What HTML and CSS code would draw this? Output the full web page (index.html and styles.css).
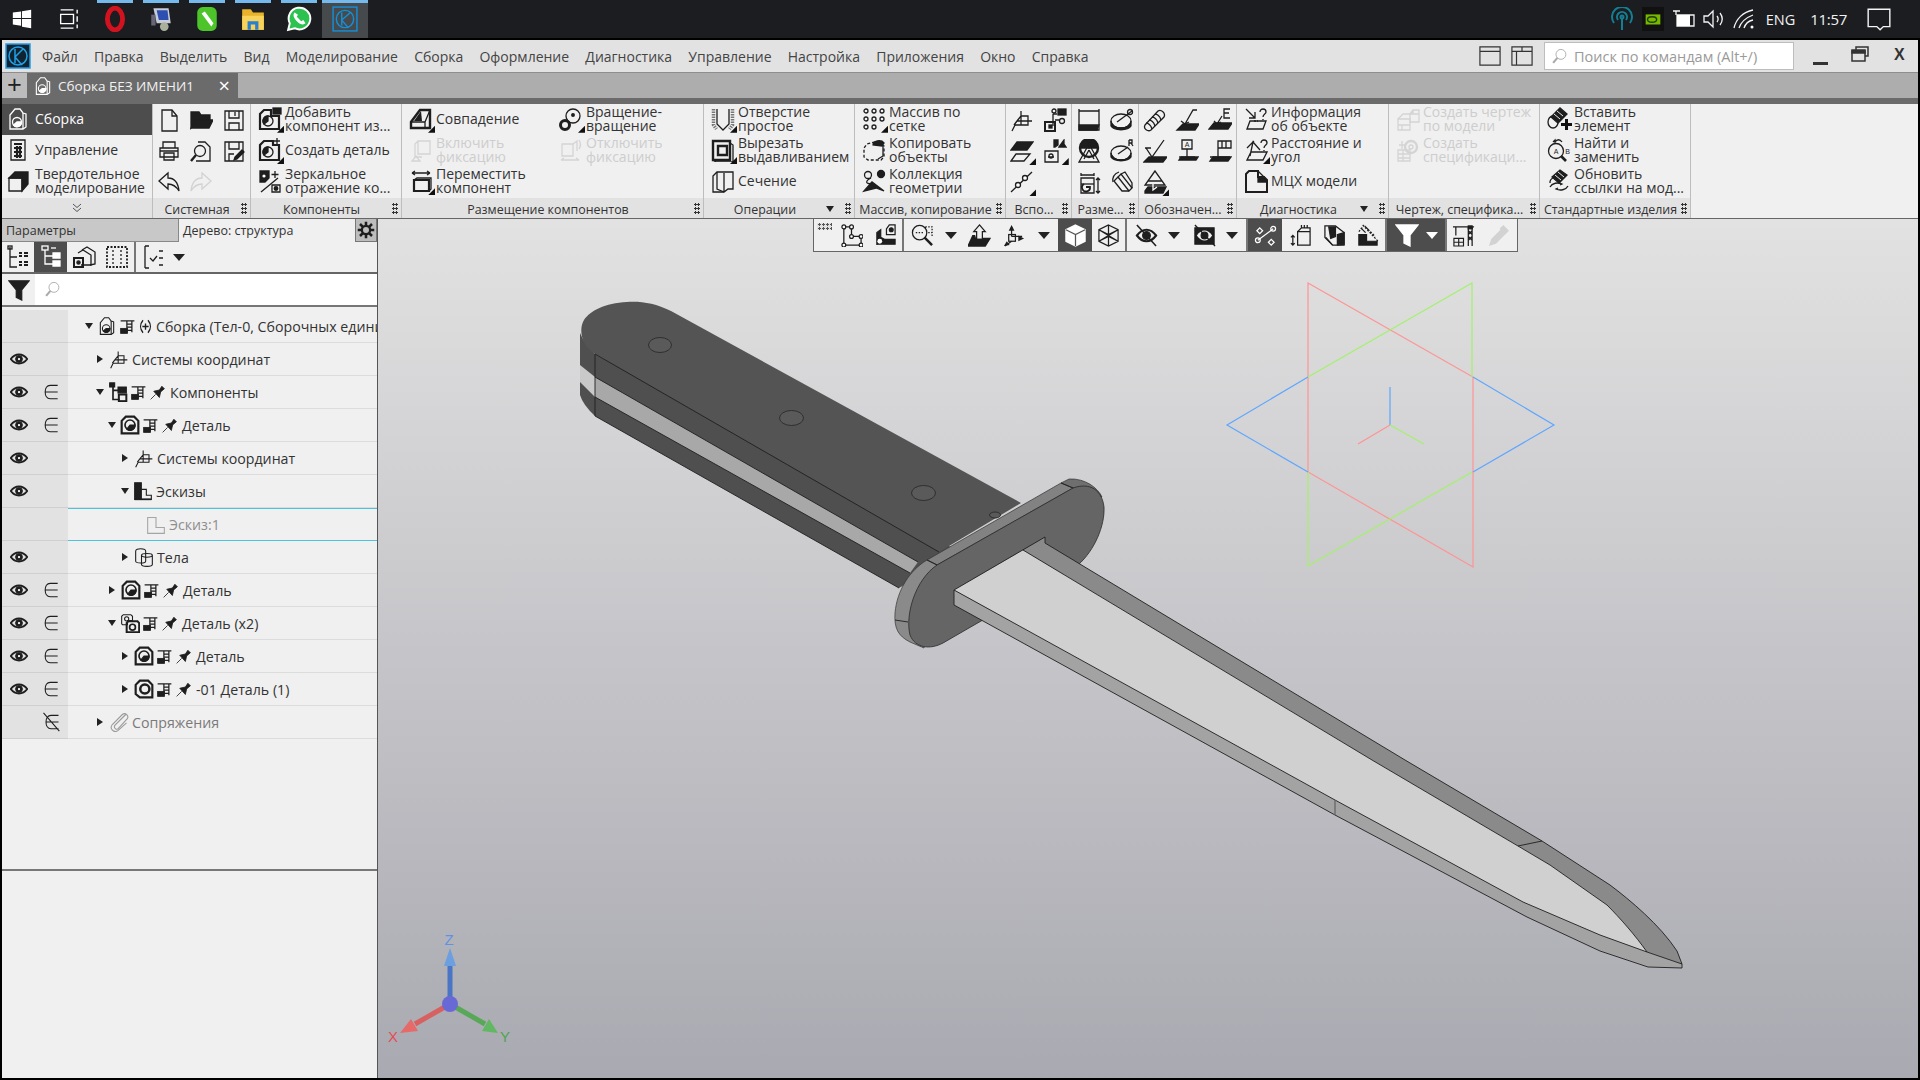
FILE: index.html
```html
<!DOCTYPE html>
<html lang="ru">
<head>
<meta charset="utf-8">
<title>КОМПАС-3D</title>
<link rel="stylesheet" href="styles.css">
</head>
<body>
<svg class="defs" aria-hidden="true">
<symbol id="asm" viewBox="0 0 24 24"><path d="M4 22V8l5-6h5l3 4 3 1v13l-3 2z"/><path d="M17 6v16"/><circle cx="11" cy="15" r="4.500"/><path d="M11 15h4.500a4.500 4.500 0 0 1-8 3z" fill="currentColor"/></symbol>
<symbol id="mgr" viewBox="0 0 24 24"><path d="M5 2h14v20H5z"/><path d="M8 6h8M8 10h8M8 14h8M8 18h8M11 8v12M14 8v12" stroke-width="2.200"/></symbol>
<symbol id="solid" viewBox="0 0 24 24"><path d="M3 22V9h13v13z"/><path d="M3 9l6-6h13v12l-6 7V9z" fill="currentColor"/></symbol>
<symbol id="doc" viewBox="0 0 24 24"><path d="M5 2h10l5 6v15H5z"/><path d="M15 2v6h5"/></symbol>
<symbol id="open" viewBox="0 0 24 24"><path d="M2 7V4h8l2 3h9v5H8l-6 8z" fill="currentColor"/><path d="M2 20l5-8h17l-4 8z" fill="currentColor"/></symbol>
<symbol id="save" viewBox="0 0 24 24"><path d="M3 3h18v19H3z"/><path d="M7 3v7h10V3M7 22v-7h10v7M13 4v4"/></symbol>
<symbol id="print" viewBox="0 0 24 24"><path d="M6 9V3h12v6M3 9h18v9H3zM7 14h10v7H7zM3 12h18"/></symbol>
<symbol id="prev" viewBox="0 0 24 24"><path d="M9 3h7l5 5v14H7"/><circle cx="11" cy="12" r="5.500"/><path d="M7 16l-5 6" stroke-width="2.400"/></symbol>
<symbol id="saveas" viewBox="0 0 24 24"><path d="M3 3h18v19H3zM7 3v7h10V3M7 22v-7h5"/><path d="M12 21l3-1 7-7-2-2-7 7z" fill="currentColor"/></symbol>
<symbol id="undo" viewBox="0 0 24 24"><path d="M2 11l9-8v5c6 0 10 4 11 13-3-5-6-7-11-7v5z"/></symbol>
<symbol id="redo" viewBox="0 0 24 24"><path d="M22 11l-9-8v5c-6 0-10 4-11 13 3-5 6-7 11-7v5z"/></symbol>
<symbol id="addc" viewBox="0 0 24 24"><path d="M2 22V7l4-4h7v6h8v13z" stroke-width="2.200"/><rect x="15" y="1" width="8" height="6" fill="currentColor"/><circle cx="10" cy="14" r="5"/><path d="M10 14V9a5 5 0 0 0-4 8z" fill="currentColor"/></symbol>
<symbol id="newc" viewBox="0 0 24 24"><path d="M2 22V7l4-4h9v4h6v15z" stroke-width="2.200"/><circle cx="10" cy="14" r="5"/><path d="M10 14V9a5 5 0 0 0-4 8z" fill="currentColor"/><path d="M19 0v6M16 3h6"/></symbol>
<symbol id="mirror" viewBox="0 0 24 24"><path d="M2 2h9v7l-4 4H2z" fill="currentColor"/><circle cx="6" cy="7" r="1.600" fill="#fff" stroke="none"/><path d="M17 2v7M13.500 5.500h7M3 23L20 9"/><path d="M14 16h8v7h-8z"/><circle cx="18" cy="19.500" r="1.800" fill="currentColor"/></symbol>
<symbol id="coin" viewBox="0 0 24 24"><path d="M2 21v-6l9-12h10v18z" stroke-width="2.400"/><path d="M2 15h14v6M16 15l5-12"/><path d="M12 4l-7 10h8z" fill="currentColor" stroke="none"/></symbol>
<symbol id="rot" viewBox="0 0 24 24"><circle cx="14" cy="9" r="7"/><circle cx="14" cy="8" r="1.300" fill="currentColor"/><circle cx="6" cy="18" r="4.500" stroke-width="3"/></symbol>
<symbol id="fix" viewBox="0 0 24 24"><path d="M9 3h12v13H9zM9 3l-3 3v13M13 19h-7"/><path d="M3 23h8l-4-5z"/></symbol>
<symbol id="unfix" viewBox="0 0 24 24"><path d="M3 6h11v12H3zM14 6l4-3v10"/><path d="M2 22h18M2 22l3-2M20 22l-3-2M20 2c2 3 2 6 0 9"/></symbol>
<symbol id="move" viewBox="0 0 24 24"><path d="M3 4h18M3 4l3-2M3 4l3 2M21 4l-3-2M21 4l-3 2"/><path d="M5 11h15v11H5z" stroke-width="2.200"/><path d="M5 11l3-2h14v11l-2 2"/></symbol>
<symbol id="hole" viewBox="0 0 24 24"><path d="M2.500 2v16l3 4M21.500 2v16l-3 4" stroke-dasharray="1.500 1" stroke-width="3.500" stroke="#777"/><path d="M6 2v15l6 6 6-6V2"/></symbol>
<symbol id="cut" viewBox="0 0 24 24"><path d="M2 3h17v19H2z" stroke-width="2.400"/><path d="M19 5l3 2v17H5l-3-2"/><path d="M7 8h9v9H7z" stroke-width="2.400"/></symbol>
<symbol id="sect" viewBox="0 0 24 24"><path d="M2 7l4-4h16v17h-5l-4 3H2zM13 4v19"/><path d="M6 3v17l7 3"/></symbol>
<symbol id="grid" viewBox="0 0 24 24"><g stroke-width="1.300"><circle cx="4" cy="4" r="2"/><circle cx="12" cy="4" r="2"/><circle cx="20" cy="4" r="2"/><circle cx="4" cy="12" r="2"/><circle cx="12" cy="12" r="2"/><circle cx="20" cy="12" r="2"/><circle cx="4" cy="20" r="2"/><circle cx="12" cy="20" r="2"/></g></symbol>
<symbol id="copy" viewBox="0 0 24 24"><path d="M13 4l-8 2-3 4v9l4 3h13l3-3V8z" stroke-dasharray="3 2"/><path d="M11 7c0-4 8-6 11-2l-2 3z" fill="currentColor"/><path d="M21 8v10l-5 3"/></symbol>
<symbol id="coll" viewBox="0 0 24 24"><circle cx="19" cy="5" r="3.500" fill="currentColor"/><circle cx="6" cy="6" r="3.500"/><path d="M9 9c-6 3-6 7 2 5"/><path d="M2 22l8-9 12 9-8-3z" fill="currentColor"/></symbol>
<symbol id="cs" viewBox="0 0 24 24"><path d="M7 13h15M11 3v14M7 13l4-5h7v9H5M5 17l-3 6M7 13l-3 4"/></symbol>
<symbol id="tree2" viewBox="0 0 24 24"><path d="M10 6v12M14 6h-4M12 12h4"/><circle cx="11" cy="3" r="2"/><rect x="15" y="1" width="8" height="6" fill="currentColor"/><circle cx="19" cy="13" r="2.500"/><rect x="2" y="14" width="10" height="9" stroke-width="2"/><rect x="6" y="17" width="3" height="3" fill="currentColor"/></symbol>
<symbol id="plane" viewBox="0 0 24 24"><path d="M7 3h16l-6 8H1z" fill="currentColor"/><path d="M6 15h14l-6 7H1z"/></symbol>
<symbol id="cs2" viewBox="0 0 24 24"><path d="M2 12h13v11H2zM5 18h6"/><circle cx="8" cy="17" r="2"/><path d="M11 1h4v5l-3 2h-1zM16 8l5-7v4l2 3z" fill="currentColor"/></symbol>
<symbol id="line" viewBox="0 0 24 24"><path d="M1 22L22 2"/><circle cx="8" cy="15" r="2.500" fill="#fff"/><circle cx="15" cy="8" r="2.500" fill="#fff"/></symbol>
<symbol id="dim" viewBox="0 0 24 24"><path d="M2 1v5M22 1v5M2 3h20M2 5v17h20V5"/><path d="M2 17h20l-2 5H2z" fill="currentColor"/></symbol>
<symbol id="diam" viewBox="0 0 24 24"><ellipse cx="11" cy="13" rx="10" ry="7"/><path d="M1 13v5c3 5 17 5 20 0v-5a10 7 0 0 1-20 0z" fill="currentColor"/><path d="M7 14L22 3"/><circle cx="20" cy="4" r="2.500"/></symbol>
<symbol id="auto" viewBox="0 0 24 24"><circle cx="12" cy="9" r="9" stroke-width="2.400"/><path d="M3 9a9 9 0 0 1 9-9v9z" fill="currentColor"/><path d="M21 9a9 9 0 0 0-9-9v9z" fill="currentColor"/><path d="M12 5L2 23h20z"/><path d="M12 11l-5 9M12 11l5 9"/></symbol>
<symbol id="rad" viewBox="0 0 24 24"><ellipse cx="11" cy="14" rx="10" ry="7"/><path d="M1 14v4c3 5 17 5 20 0v-4a10 7 0 0 1-20 0z" fill="currentColor"/><path d="M8 15l10-7"/><path d="M19 1v6M19 1h3v3h-3M21 4l2 3"/></symbol>
<symbol id="cham" viewBox="0 0 24 24"><path d="M4 8h13v15H4zM4 3v3M17 3v3M4 5h13M21 8v15M19 10l2-2 2 2M19 21l2 2 2-2"/><path d="M7 14a4 4 0 1 0 6 3h-4" stroke-width="1.800"/><path d="M4 14h13"/></symbol>
<symbol id="ang" viewBox="0 0 24 24"><path d="M8 7l11 14 3-3L11 4z"/><path d="M11 4l4-2 7 11v5M8 7l-4 4 8 10h7"/><path d="M3 12c-1-5 1-8 6-10"/></symbol>
<symbol id="thread" viewBox="0 0 24 24"><path d="M2 17L15 3c3-2 8 2 6 6L8 22c-3 2-8-1-6-5z"/><path d="M12 6c2 0 5 2 6 6M9 9c2 0 5 2 6 6M6 12c2 0 5 2 6 6M3 15c2 0 5 2 6 6"/></symbol>
<symbol id="lead" viewBox="0 0 24 24"><path d="M22 2h-4L10 16M10 16l-4-3M10 16l4-2"/><path d="M8 16h16l-4 6H2z" fill="currentColor"/></symbol>
<symbol id="leadE" viewBox="0 0 24 24"><path d="M14 8L9 16M9 16l-3-3M9 16l4-2M22 1h-6v9h6M16 5h5"/><path d="M6 15h18l-4 6H1z" fill="currentColor"/></symbol>
<symbol id="rough" viewBox="0 0 24 24"><path d="M3 9l6 9L21 1M2 9h6"/><path d="M6 18h18l-4 5H1z" fill="currentColor"/></symbol>
<symbol id="tol" viewBox="0 0 24 24"><path d="M10 2h13v7H10zM14 2v7M18 2v7M10 2v16M2 18h20"/><path d="M2 22h18l3-4H5z" fill="currentColor"/></symbol>
<symbol id="note" viewBox="0 0 24 24"><path d="M12 1L2 15h20zM5 11h14"/><path d="M2 21l3-4h18l-3 6H2z" fill="currentColor"/><path d="M10 14v6l4-3" stroke="#fff"/></symbol>
<symbol id="info" viewBox="0 0 24 24"><path d="M2 2l9 9M11 5v6H5M3 22l3-8h16l-3 8z"/><path d="M16 5c0-4 6-4 6 0 0 2-3 2-3 5M19 12v1"/><path d="M10 14h4" stroke-dasharray="2 1"/></symbol>
<symbol id="dist" viewBox="0 0 24 24"><path d="M3 22l4-8h16l-4 8zM3 10l7-7M6 18L9 4l7 8"/><path d="M17 5c0-4 6-4 6 0 0 2-3 2-3 5M20 12v1"/></symbol>
<symbol id="mass" viewBox="0 0 24 24"><path d="M2 5l3-3h9v6h6l3 3v12H2z" stroke-width="2"/><path d="M14 2v11h9l-3-5h-6z" fill="currentColor"/><path d="M14 2l6 6"/></symbol>
<symbol id="draw" viewBox="0 0 24 24"><path d="M14 7l3-4h6v12h-9zM14 7h9M17 3v4"/><path d="M2 12h12v11H2zM2 18h12M6 18v5"/><path d="M2 12l5-5h7"/></symbol>
<symbol id="spec" viewBox="0 0 24 24"><path d="M2 12h12v11H2zM2 16h12M2 20h12M7 12v11"/><circle cx="15" cy="9" r="6" stroke-width="2.400"/><circle cx="15" cy="9" r="2"/><path d="M6 3v8M3 7h7"/></symbol>
<symbol id="bolt" viewBox="0 0 24 24"><ellipse cx="6" cy="15" rx="5" ry="6"/><path d="M4 10l9-9 7 6-9 9z" fill="currentColor"/><path d="M7 7l6 5M10 4l6 5" stroke="#fff" stroke-width=".9"/></symbol>
<symbol id="bolt2" viewBox="0 0 24 24"><path d="M3 14a5 5 0 0 1 3-5"/><path d="M5 8l8-7 7 5-8 8z" fill="currentColor"/><path d="M8 6l6 5M11 3l6 5" stroke="#fff" stroke-width=".9"/><path d="M3 18c2-4 8-5 12-3l-2 1M21 17c-2 4-8 5-12 3l2-1"/></symbol>
<symbol id="panel1" viewBox="0 0 24 24"><path d="M1 2h22v20H1zM1 7h22"/></symbol>
<symbol id="panel2" viewBox="0 0 24 24"><path d="M1 2h22v20H1zM1 7h22M6 7v15M12 2v5"/></symbol>
<symbol id="mag" viewBox="0 0 24 24"><circle cx="14" cy="9" r="7"/><path d="M9 14l-6 7" stroke-width="3"/></symbol>
<symbol id="tbsk" viewBox="0 0 24 24"><path d="M4 3v19h18v-9H12V3z"/><g fill="#fff"><circle cx="4" cy="3" r="2"/><circle cx="12" cy="3" r="2"/><circle cx="12" cy="13" r="2"/><circle cx="22" cy="13" r="2"/><circle cx="22" cy="22" r="2"/><circle cx="4" cy="22" r="2"/></g></symbol>
<symbol id="tbpart" viewBox="0 0 24 24"><path d="M3 22V9l4-3v8l4 2h11v5H3z" fill="currentColor"/><path d="M13 5l3-4h6v10h-9z"/><circle cx="18" cy="6" r="2" fill="currentColor"/><circle cx="6" cy="18" r="2.500" fill="#fff" stroke="none"/></symbol>
<symbol id="zoom" viewBox="0 0 24 24"><circle cx="9" cy="9" r="7.500"/><path d="M14 14l8 8" stroke-width="2.600"/><path d="M5 9h8M15 3h7v11M15 3v2M18 9h4" stroke-dasharray="1.500 1.500"/></symbol>
<symbol id="up" viewBox="0 0 24 24"><path d="M12 1l6 7h-3v8H9V8H6z"/><path d="M7 12H5l-5 11h18l5-8h-7v1H8z" fill="currentColor"/></symbol>
<symbol id="axes" viewBox="0 0 24 24"><path d="M10 13V3M10 13h11M10 18l-7 5"/><path d="M10 1l-3 6h6zM23 15l-6-3v6zM2 23l6-1-3-4z" fill="currentColor" stroke="none"/><rect x="7" y="11" width="7" height="7"/></symbol>
<symbol id="shade" viewBox="0 0 24 24"><path d="M12 1l10 5v12l-10 5-10-5V6z" fill="#fff"/><path d="M2 6l10 5 10-5M12 11v12" stroke="#555"/></symbol>
<symbol id="wire" viewBox="0 0 24 24"><path d="M12 1l10 5v12l-10 5-10-5V6zM2 6l10 5 10-5M12 11v12M2 18l10-5 10 5M12 1v12M2 6l20 12M22 6L2 18"/></symbol>
<symbol id="eye" viewBox="0 0 24 24"><path d="M1 12c6-8 16-8 22 0-6 8-16 8-22 0z" stroke-width="2.600"/><circle cx="12" cy="12" r="4.500" fill="currentColor"/><circle cx="12" cy="12" r="1.500" fill="#fff" stroke="none"/></symbol>
<symbol id="hide" viewBox="0 0 24 24"><path d="M2 12c6-8 14-8 20 0-6 8-14 8-20 0z" stroke-width="2.200"/><circle cx="12" cy="12" r="4" fill="currentColor"/><path d="M2 1l20 22" stroke-width="1.600"/></symbol>
<symbol id="hide2" viewBox="0 0 24 24"><path d="M2 4h20v17H2z" fill="currentColor"/><path d="M4 12c5-7 11-7 16 0-5 7-11 7-16 0z" fill="#f0f0f0" stroke="none"/><circle cx="12" cy="12" r="3.500" fill="currentColor"/><path d="M2 1l21 22" stroke-width="1.400"/></symbol>
<symbol id="snap" viewBox="0 0 24 24"><path d="M4 17L20 5"/><circle cx="20" cy="5" r="2.500"/><path d="M6 4l3 3-3 3-3-3zM18 16l3 3-3 3-3-3z"/><circle cx="4" cy="17" r="2.500"/></symbol>
<symbol id="fnode" viewBox="0 0 24 24"><path d="M9 8h13v14H9zM9 8l4-4h9v4M13 1v3M16 1v3M19 1v3M4 12v10M2 14l2-2 2 2M2 20l2 2 2-2"/></symbol>
<symbol id="fsolid" viewBox="0 0 24 24"><path d="M2 2h11l9 7v13H10L2 14z"/><path d="M6 3h7v10l-5 2zM15 11l7-2v12l-7 1z" fill="currentColor"/><path d="M3 14l7 8"/></symbol>
<symbol id="fsk" viewBox="0 0 24 24"><path d="M3 22V11h8v7h11v4z" fill="currentColor"/><path d="M7 1l16 17M3 8l5-6M15 8l5 5" stroke-dasharray="2 1.500"/><path d="M5 4l5 5M9 2l5 5"/></symbol>
<symbol id="filter" viewBox="0 0 24 24"><path d="M1 2h22l-8 10v11l-6-3v-8z" fill="currentColor"/></symbol>
<symbol id="crane" viewBox="0 0 24 24"><path d="M1 3h22M17 3v20M21 3v20M17 7l4 4M21 7l-4 4M17 13l4 4M21 13l-4 4M4 3v9"/><path d="M2 15h10v8H2zM2 19h10M7 15v8" stroke-width="1.200"/><rect x="17" y="2" width="4" height="3" fill="currentColor"/></symbol>
<symbol id="drop" viewBox="0 0 24 24"><path d="M3 22l2-6L15 6l4 4L9 20z" fill="currentColor"/><path d="M14 5l3-3 5 5-3 3z" fill="currentColor"/></symbol>
<symbol id="gear" viewBox="0 0 24 24"><circle cx="12" cy="12" r="5.500" stroke-width="3"/><path d="M12 1v5M12 18v5M1 12h5M18 12h5M4 4l4 4M16 16l4 4M20 4l-4 4M8 16l-4 4" stroke-width="3.400"/></symbol>
<symbol id="numtree" viewBox="0 0 24 24"><path d="M4 2v20h7M4 12h7"/><rect x="2" y="1" width="4" height="3"/><path d="M13 8h3M18 8h4M13 11h3M18 11h4M13 17h3M18 17h4M13 20h3M18 20h4" stroke-width="2"/></symbol>
<symbol id="strtree" viewBox="0 0 24 24"><path d="M6 5v14h8M6 11h8"/><rect x="3" y="1" width="6" height="4"/><path d="M14 8h7v5h-7zM14 16h7v5h-7z" fill="currentColor"/><path d="M12 3h5"/></symbol>
<symbol id="parts" viewBox="0 0 24 24"><path d="M10 5l5-3 8 5v12l-5 1"/><path d="M6 8l5-3 8 5v10H9"/><rect x="2" y="13" width="9" height="9" stroke-width="2"/><circle cx="6.500" cy="17.500" r="1.600" fill="currentColor"/></symbol>
<symbol id="dashes" viewBox="0 0 24 24"><path d="M2 2h20v20H2z" stroke-dasharray="2 1.500" stroke-width="1.800"/><path d="M8 5v14M16 5v14" stroke-dasharray="2 2"/></symbol>
<symbol id="checks" viewBox="0 0 24 24"><path d="M4 1v22M4 1h4M4 23h4M9 13l3 3 4-5M18 6h4M18 13h4M18 20h4"/></symbol>
<symbol id="model" viewBox="0 0 24 24"><path d="M1 3h22M11 3v18M19 3v18M11 8h8M11 13h8M11 18h8" stroke-width="2"/><rect x="1" y="15" width="11" height="8" fill="currentColor"/></symbol>
<symbol id="pin" viewBox="0 0 24 24"><path d="M1 23l8-8"/><path d="M6 10l9-2 4-6 4 4-6 5-2 9z" fill="currentColor"/></symbol>
<symbol id="plus" viewBox="0 0 24 24"><path d="M8 2C3 8 3 16 8 22M16 2c5 6 5 14 0 20M7 12h10M12 7v10" stroke-width="2.200"/></symbol>
<symbol id="compo" viewBox="0 0 24 24"><path d="M6 3v18h8M6 10h8M2 3h6" stroke-width="2"/><rect x="2" y="1" width="6" height="5" fill="currentColor"/><path d="M12 6h10v7H12z" fill="currentColor"/><rect x="13" y="15" width="9" height="8" stroke-width="2.400"/></symbol>
<symbol id="part" viewBox="0 0 24 24"><path d="M2 22V7l5-5h10l5 5v15z" stroke-width="2.600"/><circle cx="12" cy="12" r="6" stroke-width="2"/><path d="M12 12h6a6 6 0 0 1-10 5z" fill="currentColor"/></symbol>
<symbol id="part2" viewBox="0 0 24 24"><path d="M2 18V7l5-5h10l5 5v15H7z" stroke-width="2.600"/><circle cx="13" cy="12" r="5.500" stroke-width="3"/></symbol>
<symbol id="parts2" viewBox="0 0 24 24"><path d="M2 13V4l2-2h9l2 2v5H9v5H3z"/><circle cx="8" cy="7" r="2.500"/><path d="M8 12l2-2h11l2 2v11H8z" stroke-width="2.400"/><circle cx="15" cy="17" r="3.500" stroke-width="2"/></symbol>
<symbol id="sk" viewBox="0 0 24 24"><path d="M2 2h8v20H2z" fill="currentColor"/><path d="M10 10h6v7h6v5H10"/><path d="M2 22h20" stroke-width="2"/></symbol>
<symbol id="skf" viewBox="0 0 24 24"><path d="M2 3h10v12h10v7H2z"/></symbol>
<symbol id="bodies" viewBox="0 0 24 24"><path d="M2 5c0-4 12-4 12 0v12c0 3-12 3-12 0z"/><path d="M9 10c0-3 13-3 13 0v11c0 3-13 3-13 0zM9 10c0 3 13 3 13 0"/></symbol>
<symbol id="clip" viewBox="0 0 24 24"><path d="M20 3L7 16c-2 3 2 6 4 4l11-12c2-3-2-8-6-5L4 15c-4 5 2 11 7 7l10-9"/></symbol>
<symbol id="elem" viewBox="0 0 24 24"><path d="M20 4H11C3 4 3 20 11 20h9M5 12h15"/></symbol>
<symbol id="noelem" viewBox="0 0 24 24"><path d="M21 4H12C4 4 4 20 12 20h9M6 12h15M3 1l19 22"/></symbol>
</svg>

<header class="taskbar">
  <div class="tb-start"><svg class="tb-ico" viewBox="0 0 24 24"><path class="w" d="M2 5l9-1.300V11H2zM12 3.500L22 2v9H12zM2 12h9v7.300L2 18zM12 12h10v10l-10-1.500z"/></svg></div>
  <div class="tb-view"><svg class="tb-ico" viewBox="0 0 24 24"><path class="wl" d="M4 2h14M4 22h14M4 7h14v10H4zM22 2v4M22 9v6M22 18v4"/></svg></div>
  <div class="tb-item on"><svg class="tb-ico big" viewBox="0 0 24 24"><ellipse class="op" cx="12" cy="12" rx="7" ry="10"/></svg></div>
  <div class="tb-item on"><svg class="tb-ico big" viewBox="0 0 24 24"><path class="rd1" d="M5 2h14l2 14H8z"/><path class="rd2" d="M8 4h10l1 9H10z"/><circle class="rd3" cx="15" cy="19" r="4"/><path class="rd4" d="M3 8h4v10H3z"/></svg></div>
  <div class="tb-item on"><svg class="tb-ico big" viewBox="0 0 24 24"><rect class="gn" x="3" y="1" width="18" height="22" rx="5"/><path class="gw" d="M7 7l3-2 8 11-2 3z"/></svg></div>
  <div class="tb-item on"><svg class="tb-ico big" viewBox="0 0 24 24"><path class="fo" d="M2 3h8l2 3h10v16H2z"/><path class="fo2" d="M2 9h20v13H2z"/><path class="fo3" d="M7 22v-8h10v8h-3v-5h-4v5z"/></svg></div>
  <div class="tb-item on"><svg class="tb-ico big" viewBox="0 0 24 24"><path class="wa" d="M2 22l1.500-6A10 10 0 1 1 8 20.500z"/><path class="wa2" d="M8 6c-2 2-1 5 2 8s6 4 8 2l-2-3-2 1-4-4 1-2z"/></svg></div>
  <div class="tb-item act"><svg class="tb-ico big" viewBox="0 0 24 24"><rect class="ko" x="1" y="1" width="22" height="22"/><circle class="ko" cx="12" cy="12" r="8"/><path class="ko" d="M9 6v12M17 6l-8 7 6 7"/></svg></div>
  <div class="tb-tray">
    <svg class="tr hot" viewBox="0 0 24 24"><path d="M4 16a10 10 0 1 1 16 0M8 13a5 5 0 1 1 8 0"/><path d="M12 12v11"/><circle cx="12" cy="10" r="1.500"/></svg>
    <svg class="tr nv" viewBox="0 0 24 24"><rect x="4" y="7" width="16" height="11"/><ellipse cx="11" cy="12.500" rx="5" ry="3" class="nv2"/></svg>
    <svg class="tr wh" viewBox="0 0 24 24"><path d="M5 8h17v11H5z"/><path class="fillw" d="M5 8h13v11H5z"/><path d="M1 4h7M4 4v4"/></svg>
    <svg class="tr wh" viewBox="0 0 24 24"><path d="M2 9h4l5-5v16l-5-5H2zM15 9c1.500 2 1.500 4 0 6M18 6c3 4 3 8 0 12"/></svg>
    <svg class="tr wh" viewBox="0 0 24 24"><path d="M2 21C4 12 11 5 21 3M7 21c2-6 6-10 14-13M12 21c1-3 4-7 9-8"/><circle class="fillw" cx="20" cy="20" r="1.500"/></svg>
    <span class="tr-lang">ENG</span>
    <span class="tr-time">11:57</span>
    <svg class="tr notif" viewBox="0 0 24 24"><path d="M2 3h20v16h-6l-3 3-3-3H2z"/></svg>
  </div>
</header>

<div class="win">
  <div class="menubar">
    <svg class="logo" viewBox="0 0 26 26"><rect class="l-bg" x="1" y="1" width="24" height="24"/><circle class="l-c" cx="13" cy="13" r="9"/><path class="l-c" d="M10 6v14M18 6l-8 8 7 8"/></svg>
    <nav class="menu">
      <span>Файл</span><span>Правка</span><span>Выделить</span><span>Вид</span><span>Моделирование</span><span>Сборка</span><span>Оформление</span><span>Диагностика</span><span>Управление</span><span>Настройка</span><span>Приложения</span><span>Окно</span><span>Справка</span>
    </nav>
    <div class="menu-right">
      <svg class="i mp"><use href="#panel1"/></svg>
      <svg class="i mp"><use href="#panel2"/></svg>
      <div class="search"><svg class="i s-ico"><use href="#mag"/></svg><span>Поиск по командам (Alt+/)</span></div>
      <div class="winbtns">
        <span class="w-min"></span>
        <svg class="w-res" viewBox="0 0 18 16"><path d="M5 4V1h12v9h-3"/><path class="w-top" d="M1 4h13v3H1z"/><path d="M1 5h13v10H1z"/></svg>
        <span class="w-close">X</span>
      </div>
    </div>
  </div>
  <div class="tabbar">
    <div class="tab-add">+</div>
    <div class="tab"><svg class="i tab-i"><use href="#asm"/></svg><span class="tab-t">Сборка БЕЗ ИМЕНИ1</span><span class="tab-x">×</span></div>
  </div>
  <div class="tabline"></div>

  <div class="ribbon">
    <div class="nav">
      <div class="nav-body">
        <div class="nav-it sel"><svg class="i"><use href="#asm"/></svg><span>Сборка</span></div>
        <div class="nav-it"><svg class="i"><use href="#mgr"/></svg><span>Управление</span></div>
        <div class="nav-it"><svg class="i"><use href="#solid"/></svg><span>Твердотельное<br>моделирование</span></div>
      </div>
      <div class="nav-foot"><svg class="chev" viewBox="0 0 10 10"><path d="M1 1l4 3.500L9 1M1 5l4 3.500L9 5"/></svg></div>
    </div>

    <section class="grp g98">
      <div class="icons c3">
        <svg class="i"><use href="#doc"/></svg><svg class="i"><use href="#open"/></svg><svg class="i"><use href="#save"/></svg>
        <svg class="i"><use href="#print"/></svg><svg class="i"><use href="#prev"/></svg><svg class="i"><use href="#saveas"/></svg>
        <svg class="i"><use href="#undo"/></svg><svg class="i off"><use href="#redo"/></svg><span></span>
      </div>
      <footer class="ft"><span class="lb">Системная</span><i class="grip"></i></footer>
    </section>

    <section class="grp g151">
      <div class="items">
        <div class="it"><span class="ic more"><svg class="i"><use href="#addc"/></svg></span><span>Добавить<br>компонент из...</span></div>
        <div class="it"><span class="ic more"><svg class="i"><use href="#newc"/></svg></span><span>Создать деталь</span></div>
        <div class="it"><span class="ic"><svg class="i"><use href="#mirror"/></svg></span><span>Зеркальное<br>отражение ко...</span></div>
      </div>
      <footer class="ft"><span class="lb">Компоненты</span><i class="grip"></i></footer>
    </section>

    <section class="grp g302">
      <div class="items two">
        <div class="it"><span class="ic more"><svg class="i"><use href="#coin"/></svg></span><span>Совпадение</span></div>
        <div class="it dis"><span class="ic"><svg class="i"><use href="#fix"/></svg></span><span>Включить<br>фиксацию</span></div>
        <div class="it"><span class="ic more"><svg class="i"><use href="#move"/></svg></span><span>Переместить<br>компонент</span></div>
        <div class="it"><span class="ic more"><svg class="i"><use href="#rot"/></svg></span><span>Вращение-<br>вращение</span></div>
        <div class="it dis"><span class="ic"><svg class="i"><use href="#unfix"/></svg></span><span>Отключить<br>фиксацию</span></div>
      </div>
      <footer class="ft"><span class="lb">Размещение компонентов</span><i class="grip"></i></footer>
    </section>

    <section class="grp g151">
      <div class="items">
        <div class="it"><span class="ic more"><svg class="i"><use href="#hole"/></svg></span><span>Отверстие<br>простое</span></div>
        <div class="it"><span class="ic more"><svg class="i"><use href="#cut"/></svg></span><span>Вырезать<br>выдавливанием</span></div>
        <div class="it"><span class="ic"><svg class="i"><use href="#sect"/></svg></span><span>Сечение</span></div>
      </div>
      <footer class="ft"><span class="lb">Операции</span><i class="caret"></i><i class="grip"></i></footer>
    </section>

    <section class="grp g151">
      <div class="items">
        <div class="it"><span class="ic more"><svg class="i"><use href="#grid"/></svg></span><span>Массив по<br>сетке</span></div>
        <div class="it"><span class="ic"><svg class="i"><use href="#copy"/></svg></span><span>Копировать<br>объекты</span></div>
        <div class="it"><span class="ic"><svg class="i"><use href="#coll"/></svg></span><span>Коллекция<br>геометрии</span></div>
      </div>
      <footer class="ft"><span class="lb">Массив, копирование</span><i class="grip"></i></footer>
    </section>

    <section class="grp g66">
      <div class="icons c2">
        <svg class="i"><use href="#cs"/></svg><svg class="i"><use href="#tree2"/></svg>
        <span class="ic more"><svg class="i"><use href="#plane"/></svg></span><span class="ic more"><svg class="i"><use href="#cs2"/></svg></span>
        <span class="ic more"><svg class="i"><use href="#line"/></svg></span><span></span>
      </div>
      <footer class="ft"><span class="lb">Вспо...</span><i class="grip"></i></footer>
    </section>

    <section class="grp g67">
      <div class="icons c2">
        <svg class="i"><use href="#dim"/></svg><svg class="i"><use href="#diam"/></svg>
        <svg class="i"><use href="#auto"/></svg><svg class="i"><use href="#rad"/></svg>
        <svg class="i"><use href="#cham"/></svg><svg class="i"><use href="#ang"/></svg>
      </div>
      <footer class="ft"><span class="lb">Разме...</span><i class="grip"></i></footer>
    </section>

    <section class="grp g98">
      <div class="icons c3">
        <svg class="i"><use href="#thread"/></svg><svg class="i"><use href="#lead"/></svg><svg class="i"><use href="#leadE"/></svg>
        <svg class="i"><use href="#rough"/></svg><svg class="i" viewBox="0 0 24 24"><path d="M7 1h10v9H7zM12 10v8"/><text x="12" y="8" class="mini">А</text><path d="M4 18h16"/><path d="M4 21h17l2-3H6z" fill="currentColor"/></svg><svg class="i"><use href="#tol"/></svg>
        <span class="ic more"><svg class="i"><use href="#note"/></svg></span><span></span><span></span>
      </div>
      <footer class="ft"><span class="lb">Обозначен...</span><i class="grip"></i></footer>
    </section>

    <section class="grp g152">
      <div class="items">
        <div class="it"><span class="ic"><svg class="i"><use href="#info"/></svg></span><span>Информация<br>об объекте</span></div>
        <div class="it"><span class="ic more"><svg class="i"><use href="#dist"/></svg></span><span>Расстояние и<br>угол</span></div>
        <div class="it"><span class="ic"><svg class="i"><use href="#mass"/></svg></span><span>МЦХ модели</span></div>
      </div>
      <footer class="ft"><span class="lb">Диагностика</span><i class="caret"></i><i class="grip"></i></footer>
    </section>

    <section class="grp g151">
      <div class="items">
        <div class="it dis"><span class="ic"><svg class="i"><use href="#draw"/></svg></span><span>Создать чертеж<br>по модели</span></div>
        <div class="it dis"><span class="ic"><svg class="i"><use href="#spec"/></svg></span><span>Создать<br>спецификаци...</span></div>
        <div class="it"></div>
      </div>
      <footer class="ft"><span class="lb">Чертеж, специфика...</span><i class="grip"></i></footer>
    </section>

    <section class="grp g151">
      <div class="items">
        <div class="it"><span class="ic"><svg class="i"><use href="#bolt"/></svg><b class="plusmark"></b></span><span>Вставить<br>элемент</span></div>
        <div class="it"><span class="ic"><svg class="i" viewBox="0 0 24 24"><circle cx="9" cy="13" r="7.500"/><text x="9" y="16" class="mini">А</text><text x="20.500" y="16" class="mini">В</text><path d="M14 18l5 5" stroke-width="2.600"/><path d="M8 4c2-3 5-3 7 0M6 4l2-2v3"/></svg></span><span>Найти и<br>заменить</span></div>
        <div class="it"><span class="ic"><svg class="i"><use href="#bolt2"/></svg></span><span>Обновить<br>ссылки на мод...</span></div>
      </div>
      <footer class="ft"><span class="lb">Стандартные изделия</span><i class="grip"></i></footer>
    </section>
  </div>

  <div class="main">
    <aside class="side">
      <div class="side-tabs">
        <div class="st st-off">Параметры</div>
        <div class="st st-on">Дерево: структура</div>
        <div class="st-gear"><svg class="i"><use href="#gear"/></svg></div>
      </div>
      <div class="side-tools">
        <div class="stb first"><svg class="i"><use href="#numtree"/></svg></div>
        <div class="stb sel"><svg class="i"><use href="#strtree"/></svg></div>
        <div class="stb"><svg class="i"><use href="#parts"/></svg></div>
        <div class="stb"><svg class="i"><use href="#dashes"/></svg></div>
        <div class="stb-sep"></div>
        <div class="stb"><svg class="i"><use href="#checks"/></svg></div>
        <i class="caret big"></i>
      </div>
      <div class="side-filter">
        <div class="sf-btn"><svg class="i"><use href="#filter"/></svg></div>
        <svg class="i sf-mag"><use href="#mag"/></svg>
      </div>
      <div class="tree">
        <div class="row"><div class="gut"><span></span><span></span></div><div class="node l0"><i class="ar dn"></i><svg class="i n"><use href="#asm"/></svg><svg class="i m"><use href="#model"/></svg><svg class="i p plus"><use href="#plus"/></svg><span>Сборка (Тел-0, Сборочных единиц</span></div></div>
        <div class="row"><div class="gut"><svg class="i e"><use href="#eye"/></svg><span></span></div><div class="node l1"><i class="ar"></i><svg class="i n"><use href="#cs"/></svg><span>Системы координат</span></div></div>
        <div class="row"><div class="gut"><svg class="i e"><use href="#eye"/></svg><svg class="i e2"><use href="#elem"/></svg></div><div class="node l1"><i class="ar dn"></i><svg class="i n"><use href="#compo"/></svg><svg class="i m"><use href="#model"/></svg><svg class="i p"><use href="#pin"/></svg><span>Компоненты</span></div></div>
        <div class="row"><div class="gut"><svg class="i e"><use href="#eye"/></svg><svg class="i e2"><use href="#elem"/></svg></div><div class="node l2"><i class="ar dn"></i><svg class="i n"><use href="#part"/></svg><svg class="i m"><use href="#model"/></svg><svg class="i p"><use href="#pin"/></svg><span>Деталь</span></div></div>
        <div class="row"><div class="gut"><svg class="i e"><use href="#eye"/></svg><span></span></div><div class="node l3"><i class="ar"></i><svg class="i n"><use href="#cs"/></svg><span>Системы координат</span></div></div>
        <div class="row"><div class="gut"><svg class="i e"><use href="#eye"/></svg><span></span></div><div class="node l3"><i class="ar dn"></i><svg class="i n"><use href="#sk"/></svg><span>Эскизы</span></div></div>
        <div class="row cur"><div class="gut"><span></span><span></span></div><div class="node l4 gray"><svg class="i n"><use href="#skf"/></svg><span>Эскиз:1</span></div></div>
        <div class="row"><div class="gut"><svg class="i e"><use href="#eye"/></svg><span></span></div><div class="node l3"><i class="ar"></i><svg class="i n"><use href="#bodies"/></svg><span>Тела</span></div></div>
        <div class="row"><div class="gut"><svg class="i e"><use href="#eye"/></svg><svg class="i e2"><use href="#elem"/></svg></div><div class="node l2"><i class="ar"></i><svg class="i n"><use href="#part"/></svg><svg class="i m"><use href="#model"/></svg><svg class="i p"><use href="#pin"/></svg><span>Деталь</span></div></div>
        <div class="row"><div class="gut"><svg class="i e"><use href="#eye"/></svg><svg class="i e2"><use href="#elem"/></svg></div><div class="node l2"><i class="ar dn"></i><svg class="i n"><use href="#parts2"/></svg><svg class="i m"><use href="#model"/></svg><svg class="i p"><use href="#pin"/></svg><span>Деталь (x2)</span></div></div>
        <div class="row"><div class="gut"><svg class="i e"><use href="#eye"/></svg><svg class="i e2"><use href="#elem"/></svg></div><div class="node l3"><i class="ar"></i><svg class="i n"><use href="#part"/></svg><svg class="i m"><use href="#model"/></svg><svg class="i p"><use href="#pin"/></svg><span>Деталь</span></div></div>
        <div class="row"><div class="gut"><svg class="i e"><use href="#eye"/></svg><svg class="i e2"><use href="#elem"/></svg></div><div class="node l3"><i class="ar"></i><svg class="i n"><use href="#part2"/></svg><svg class="i m"><use href="#model"/></svg><svg class="i p"><use href="#pin"/></svg><span>-01 Деталь (1)</span></div></div>
        <div class="row"><div class="gut"><span></span><svg class="i e2"><use href="#noelem"/></svg></div><div class="node l1 gray2"><i class="ar"></i><svg class="i n"><use href="#clip"/></svg><span>Сопряжения</span></div></div>
      </div>
      <div class="side-low"></div>
    </aside>

    <div class="view">
      <svg class="scene" viewBox="378 219 1540 859">
        <!-- handle -->
        <path class="h-side" d="M580 333V395Q583 405 595 416L899 588L960 552L595 354Q585 345 580 333z"/>
        <path class="h-strip" d="M595 377L918 562L910 573L595 397z"/>
        <path class="h-end" d="M580 365L595 377V397L580 382z"/>
        <path class="ln" d="M595 354V416M595 416L899 588M595 377L918 562M595 397L910 573"/>
        <path class="h-top" d="M595 354L939 552L1021 503L671 311C655 303 640 301 627 302C605 303 590 311 584 320C579 328 580 345 595 354z"/>
        <path class="ln" d="M595 354L939 552"/>
        <ellipse class="hol" cx="660" cy="345" rx="11.500" ry="7.500"/>
        <ellipse class="hol" cx="791.500" cy="418" rx="12" ry="7.500"/>
        <ellipse class="hol" cx="923.500" cy="493" rx="12" ry="7.500"/>
        <ellipse class="hol" cx="995" cy="515" rx="5.500" ry="3"/>
        <!-- guard -->
        <path class="g-back" d="M1061 483L1069 479C1085 478 1098 488 1102 497L1073 488z"/>
        <path class="g-top" d="M927 560L1061 483L1073 488L937 565z"/>
        <path class="g-side" d="M927 560C910 570 897 590 895 613C894 628 898 636 910 642L924 648L937 565z"/>
        <path class="g-front" d="M937 565L1073 488C1090 482 1102 490 1104 507C1105 525 1095 550 1078 565L943 643C930 650 915 648 910 635C905 615 915 580 937 565z"/>
        <path class="ln" d="M895 620L908 622M937 565L927 560M1061 483L1073 488"/>
        <!-- blade -->
        <path class="b-up" d="M1023 550L1045 537V543L1405 760L1542 841L1610 885C1630 900 1660 925 1677 951L1682 964L1647 952C1630 930 1615 912 1607 905L1550 865L1518 846L1372 760z"/>
        <path class="b-top" d="M954 590L1023 550L1372 760L1518 846L1550 865L1607 905C1620 918 1635 935 1647 952L1600 935L1523 902L1335 800z"/>
        <path class="b-low" d="M954 590L1335 800L1523 902L1600 935L1647 952L1682 964V968L1648 967L1600 951L1527 917L1335 815L954 605z"/>
        <path class="ln" d="M1045 537V543L1405 760L1542 841L1610 885C1630 900 1660 925 1677 951L1682 964V968L1648 967L1600 951L1527 917L1335 815L954 605V590L1335 800L1523 902L1600 935L1647 952L1682 964M1023 550L1372 760L1518 846L1550 865L1607 905C1620 918 1635 935 1647 952M954 590L1045 537M1518 846L1542 841"/>
        <path class="ln2" d="M1335 800V815"/>
        <!-- origin triad -->
        <path class="pl-r" d="M1308 377V283L1473 377V567L1308 472z"/>
        <path class="pl-g" d="M1308 377L1472 283V377M1308 472V566L1472 472"/>
        <path class="pl-b" d="M1308 377L1227 425L1308 472M1473 377L1554 425L1473 472"/>
        <path class="pl-b" d="M1390 425V387"/>
        <path class="pl-r" d="M1390 425L1358 444"/>
        <path class="pl-g" d="M1390 425L1424 444"/>
        <!-- axis gizmo -->
        <path class="ax-z" d="M450 1004V964"/>
        <path class="ax-x" d="M450 1004L415 1024"/>
        <path class="ax-y" d="M450 1004L485 1024"/>
        <path class="ah-z" d="M450 948L456 966H444z"/>
        <path class="ah-x" d="M400 1033L411 1019L418 1031z"/>
        <path class="ah-y" d="M498 1033L482 1031L489 1019z"/>
        <circle class="ax-c" cx="450" cy="1004" r="8"/>
        <text class="lt-z" x="449" y="945">Z</text>
        <text class="lt-x" x="393" y="1042">X</text>
        <text class="lt-y" x="505" y="1042">Y</text>
      </svg>

      <div class="float">
        <div class="fl-grip"></div>
        <div class="fb w34"><svg class="i"><use href="#tbsk"/></svg></div>
        <div class="fb w34"><svg class="i"><use href="#tbpart"/></svg></div>
        <div class="fsep"></div>
        <div class="fb w36"><svg class="i"><use href="#zoom"/></svg></div>
        <div class="fc w21"><i class="caret big"></i></div>
        <div class="fb w36"><svg class="i"><use href="#up"/></svg></div>
        <div class="fb w33"><svg class="i"><use href="#axes"/></svg></div>
        <div class="fc w28"><i class="caret big"></i></div>
        <div class="fb sel w34"><svg class="i"><use href="#shade"/></svg></div>
        <div class="fb w33"><svg class="i"><use href="#wire"/></svg></div>
        <div class="fsep"></div>
        <div class="fb w38"><svg class="i"><use href="#hide"/></svg></div>
        <div class="fc w18"><i class="caret big"></i></div>
        <div class="fb w42"><svg class="i"><use href="#hide2"/></svg></div>
        <div class="fc w21 lft"><i class="caret big"></i></div>
        <div class="fsep"></div>
        <div class="fb sel w34"><svg class="i"><use href="#snap"/></svg></div>
        <div class="fb w36"><svg class="i"><use href="#fnode"/></svg></div>
        <div class="fb w32"><svg class="i"><use href="#fsolid"/></svg></div>
        <div class="fb w35"><svg class="i"><use href="#fsk"/></svg></div>
        <div class="fsep"></div>
        <div class="ffilter"><svg class="i"><use href="#filter"/></svg><i class="caret big wht"></i></div>
        <div class="fsep"></div>
        <div class="fb w32"><svg class="i"><use href="#crane"/></svg></div>
        <div class="fb w38"><svg class="i off"><use href="#drop"/></svg></div>
      </div>
    </div>
  </div>
</div>
</body>
</html>
```
FILE: styles.css
```css
*{box-sizing:border-box}
html,body{margin:0;padding:0}
body{width:1920px;height:1080px;overflow:hidden;background:#000;font-family:"Open Sans","Noto Sans",sans-serif;color:#333;display:flex;flex-direction:column}
.defs{width:0;height:0;position:absolute}
.mini{font:7px "Liberation Sans",sans-serif;text-anchor:middle;stroke:none;fill:currentColor}

/* generic icon */
.i{width:24px;height:24px;flex:none;color:#1e1e1e;fill:none;stroke:currentColor;stroke-width:1.300;stroke-linejoin:miter;display:block}
.i.off{color:#d2d2d2}

/* taskbar */
.taskbar{height:38px;flex:none;background:#1c1d20;display:flex;color:#fff}
.tb-start{width:44px;display:flex;align-items:center;justify-content:center}
.tb-view{width:48px;display:flex;align-items:center;justify-content:center}
.tb-item{width:46px;display:flex;align-items:center;justify-content:center;position:relative}
.tb-item.on::before{content:"";position:absolute;left:5px;right:5px;top:0;height:3px;background:#76b9ed}
.tb-item.act{background:#474a4d}
.tb-item.act::before{content:"";position:absolute;left:0;right:0;top:0;height:3px;background:#76b9ed}
.tb-ico{width:22px;height:22px}
.tb-ico.big{width:26px;height:26px}
.w{fill:#fff}.wl{fill:none;stroke:#fff;stroke-width:1.500}
.op{fill:none;stroke:#d3121f;stroke-width:4.500}
.rd1{fill:#c8ccd8}.rd2{fill:#2c4fb0}.rd3{fill:#a9b19e}.rd4{fill:#667}
.gn{fill:#4cc42a}.gw{fill:#fff}
.fo{fill:#e8b32a}.fo2{fill:#f7d35c}.fo3{fill:#2a7fd0}
.wa{fill:#2bc24f;stroke:#fff;stroke-width:1.800}.wa2{fill:#fff}
.ko{fill:none;stroke:#1390d8;stroke-width:1.300}
.tb-tray{margin-left:auto;display:flex;align-items:center;padding-right:28px}
.tr{width:24px;height:24px;fill:none;stroke:#f4f4f4;stroke-width:1.300}
.hot{stroke:#127f95;stroke-width:2;margin-right:8px}
.nv{background:#111;fill:#76b900;stroke:none;width:22px;margin-right:8px}
.nv2{fill:none;stroke:#223d00;stroke-width:1.500}
.wh{margin-right:6px}
.fillw{fill:#fff;stroke:none}
.tr-lang{font-size:14.500px;color:#f2f2f2;margin:0 15px 0 4px}
.tr-time{font-size:15px;color:#f2f2f2;margin-right:19px;letter-spacing:-.3px}
.notif{width:26px;height:26px}

/* window */
.win{margin:2px;height:1038px;display:flex;flex-direction:column;background:#f0f0f0}
.menubar{height:33px;flex:none;background:#e2e2e2;border-bottom:1px solid #8e8e8e;display:flex;align-items:center;padding-left:3px}
.logo{width:26px;height:26px;flex:none}
.l-bg{fill:#10232e;stroke:#1f9fe8;stroke-width:1.500}
.l-c{fill:none;stroke:#1f9fe8;stroke-width:1.500}
.menu{display:flex;gap:16.200px;margin-left:11px;font-size:14px;color:#444;white-space:nowrap}
.menu-right{margin-left:auto;display:flex;align-items:center}
.mp{width:22px;height:22px;margin-right:10px;color:#333}
.search{width:250px;height:28px;margin-left:1px;background:#fff;border:1px solid #bdbdbd;display:flex;align-items:center;padding-left:6px;font-size:14.500px;color:#9a9a9a;white-space:nowrap}
.s-ico{width:17px;height:17px;margin-right:6px;color:#aaa}
.winbtns{display:flex;align-items:center;width:124px;padding-left:19px}
.w-min{width:15px;height:3px;background:#333;margin-top:14px}
.w-res{width:18px;height:16px;margin-left:23px;fill:none;stroke:#333;stroke-width:1.500;margin-top:-4px}
.w-top{fill:#333}
.w-close{margin-left:25px;font:bold 16px "Liberation Sans",sans-serif;color:#333;margin-top:-3px}

.tabbar{height:25px;flex:none;background:#adadad;display:flex}
.tab-add{width:25px;background:#bcbcbc;font-size:26px;line-height:23px;text-align:center;color:#222}
.tab{width:211px;background:#6b6b6b;color:#fff;display:flex;align-items:center;padding-left:6px;font-size:13.500px;white-space:nowrap}
.tab-i{width:20px;height:20px;color:#fff}
.tab-t{margin-left:5px;color:#f2f2f2}
.tab-x{margin-left:auto;margin-right:8px;font-size:20px;line-height:20px;color:#fff}
.tabline{height:6px;flex:none;background:#6b6b6b}

/* ribbon */
.ribbon{height:115px;flex:none;display:flex;background:#f0f0f0;border-bottom:1px solid #666}
.nav{width:151px;flex:none;border-right:1px solid #bdbdbd;display:flex;flex-direction:column}
.nav-body{height:94px;display:flex;flex-direction:column}
.nav-it{flex:1;display:flex;align-items:center;gap:5px;padding:0 0 2px 4px;font-size:14px;line-height:14px;color:#333}
.nav-it.sel{background:#4d4d4d;color:#fff}
.nav-it.sel .i{color:#fff}
.nav-foot{flex:1;background:#e2e2e2;display:flex;align-items:center;justify-content:center}
.chev{width:10px;height:10px;fill:none;stroke:#555;stroke-width:1}
.grp{flex:none;border-right:1px solid #bdbdbd;display:flex;flex-direction:column}
.g98{width:98px}.g151{width:151px}.g302{width:302px}.g66{width:66px}.g67{width:67px}.g152{width:152px}
.icons{height:94px;display:grid;grid-template-rows:repeat(3,1fr);align-items:center;justify-items:center;flex:none}
.c3{grid-template-columns:repeat(3,1fr)}
.c2{grid-template-columns:repeat(2,1fr)}
.items{height:94px;flex:none;display:grid;grid-template-rows:repeat(3,1fr);grid-auto-flow:column;grid-auto-columns:150px}
.it{display:flex;align-items:center;gap:3px;padding:0 0 2px 7px;font-size:14px;line-height:14px;color:#333;white-space:nowrap}
.it.dis{color:#cdcdcd}
.it.dis .i{color:#d4d4d4}
.ic{position:relative;display:block;width:24px;height:24px;flex:none}
.ic.more::after{content:"";position:absolute;right:-2px;bottom:-2px;width:7px;height:7px;background:#111;clip-path:polygon(100% 0,100% 100%,0 100%)}
.plusmark{position:absolute;right:-1px;bottom:1px;width:11px;height:11px;background:linear-gradient(#111,#111) center/100% 3px no-repeat,linear-gradient(#111,#111) center/3px 100% no-repeat}
.ft{flex:1;background:#e2e2e2;display:flex;align-items:center;font-size:12.400px;color:#333;white-space:nowrap;padding:2px 3px 0 0}
.lb{flex:1;text-align:center;overflow:hidden}
.grip{width:6px;height:12px;flex:none;background:radial-gradient(circle at 1.500px 1.500px,#333 1.200px,transparent 1.300px) 0 0/3px 4px}
.caret{width:0;height:0;border:4.500px solid transparent;border-top:6px solid #222;border-bottom:0;flex:none;margin-right:11px}
.caret.big{border-width:7px 6px 0;border-top-color:#222;margin:0}
.caret.wht{border-top-color:#fff}

/* main */
.main{flex:1;display:flex;min-height:0}
.side{width:376px;flex:none;border-right:1px solid #555;display:flex;flex-direction:column;background:#f0f0f0}
.side-tabs{height:23px;flex:none;display:flex;font-size:12.500px;color:#333}
.st{display:flex;align-items:center;padding-left:4px;white-space:nowrap}
.st-off{width:177px;background:#c8c8c8;border-right:1px solid #888;border-bottom:1px solid #888}
.st-on{width:176px;background:#f0f0f0}
.st-gear{width:22px;background:#bdbdbd;border:1px solid #777;border-top:0;display:flex;align-items:center;justify-content:center}
.st-gear .i{width:18px;height:18px}
.side-tools{height:32px;flex:none;border-bottom:2px solid #666;display:flex;align-items:center}
.stb{width:33px;height:30px;display:flex;align-items:center;justify-content:center}
.stb.first{width:32px}
.stb.sel{background:#4d4d4d}
.stb.sel .i{color:#fff}
.stb-sep{width:2px;height:30px;background:#777;margin-left:1px}
.side-tools .caret{margin-left:4px}
.side-filter{height:33px;flex:none;background:#fff;border-bottom:2px solid #777;display:flex;align-items:center}
.sf-btn{width:33px;height:100%;background:#f0f0f0;display:flex;align-items:center;justify-content:center}
.sf-btn .i{width:22px;height:22px}
.sf-mag{width:17px;height:17px;margin-left:9px;color:#aaa}
.tree{margin-top:3px;flex:none;font-size:14.200px;color:#333}
.row{height:33px;display:flex;border-bottom:1px solid #dcdcdc}
.gut{width:66px;flex:none;background:#e2e2e2;display:flex;align-items:center;border-bottom:1px solid #cfcfcf;height:33px}
.gut>*{width:33px}
.gut .e{width:18px;height:18px;margin:0 7.500px}
.gut .e2{width:20px;height:20px;margin:0 6px}
.gut span{height:1px}
.node{flex:1;display:flex;align-items:center;white-space:nowrap;overflow:hidden;min-width:0}
.l0{padding-left:17px}.l1{padding-left:28px}.l2{padding-left:40px}.l3{padding-left:53px}.l4{padding-left:78px}
.ar{width:0;height:0;border-style:solid;border-color:transparent;border-left-color:#222;border-width:4px 0 4px 6px;margin-right:6px;margin-left:1px;flex:none}
.ar.dn{border-width:6px 4px 0;border-top-color:#222;border-left-color:transparent;margin-left:0;margin-right:4px}
.node .n{width:20px;height:20px;margin-right:3px}
.node .m{width:15px;height:15px;margin-right:4px}
.node .p{width:15px;height:15px;margin-right:5px}
.node .plus{margin:0 3px 0 -1px}
.gray{color:#8e8e8e}.gray .i{color:#a5a5a5}
.gray2{color:#7a7a7a}.gray2 .i{color:#9a9a9a}
.row.cur .node{border-top:1px solid #4cc2de;border-bottom:1px solid #4cc2de;height:33px}
.row.cur{border-bottom:0}
.side-low{margin-top:130px;flex:1;border-top:2px solid #777}

/* viewport */
.view{flex:1;position:relative;background:linear-gradient(#e2e2e2,#a9a9b1);overflow:hidden}
.scene{position:absolute;left:0;top:0;width:1540px;height:859px}
.ln{fill:none;stroke:#1f1f1f;stroke-width:.9}
.ln2{fill:none;stroke:#666;stroke-width:1.300}
.h-side{fill:#4f4f4f}
.h-strip{fill:#a8a8a8}
.h-end{fill:#c9c9c9}
.h-top{fill:#545454}
.hol{fill:#5a5a5a;stroke:#2a2a2a;stroke-width:.9}
.g-back{fill:#6f6f6f;stroke:#333;stroke-width:.7}
.g-top{fill:#828282;stroke:#333;stroke-width:.7}
.g-side{fill:#8a8a8a;stroke:#333;stroke-width:.7}
.g-front{fill:#656565;stroke:#2a2a2a;stroke-width:.8}
.b-up{fill:#8a8a8a}
.b-top{fill:#d0d0d0}
.b-low{fill:#a3a3a3}
.pl-r{fill:none;stroke:#ff9393;stroke-width:1.200}
.pl-g{fill:none;stroke:#a2f26a;stroke-width:1.200}
.pl-b{fill:none;stroke:#5ea6ff;stroke-width:1.200}
.ax-z{stroke:#4a74c4;stroke-width:5}
.ax-x{stroke:#d86060;stroke-width:5}
.ax-y{stroke:#58a858;stroke-width:5}
.ah-z{fill:#6b9fe0}.ah-x{fill:#e66a6a}.ah-y{fill:#62b862}
.ax-c{fill:#6969d6}
.lt-z,.lt-x,.lt-y{font:15px "Liberation Sans",sans-serif;text-anchor:middle}
.lt-z{fill:#5e92e6}.lt-x{fill:#e64c55}.lt-y{fill:#4da64d}

/* floating toolbar */
.float{position:absolute;left:435px;top:0;width:705px;height:33px;background:#f0f0f0;border:1px solid #666;border-top:0;display:flex;align-items:stretch}
.fl-grip{width:20px;flex:none;background:#e2e2e2 radial-gradient(circle at 1.500px 1.500px,#555 1px,transparent 1.100px);background-size:4px 4px;background-clip:content-box;padding:4px 2px 21px 3px}
.fsep{width:2px;background:#777;flex:none}
.fb{flex:none;display:flex;align-items:center;justify-content:center}
.fb .i{width:23px;height:23px}
.fb.sel{background:#4d4d4d}
.fb.sel .i{color:#fff}
.fc{flex:none;display:flex;align-items:center;justify-content:center}
.fc.lft{justify-content:flex-start;padding-left:1px}
.w18{width:18px}.w21{width:21px}.w28{width:28px}.w32{width:32px}.w33{width:33px}.w34{width:34px}.w35{width:35px}.w36{width:36px}.w38{width:38px}.w42{width:42px}
.ffilter{width:58px;flex:none;background:#4d4d4d;display:flex;align-items:center;justify-content:space-around;padding:0 4px}
.ffilter .i{color:#fff}
```
